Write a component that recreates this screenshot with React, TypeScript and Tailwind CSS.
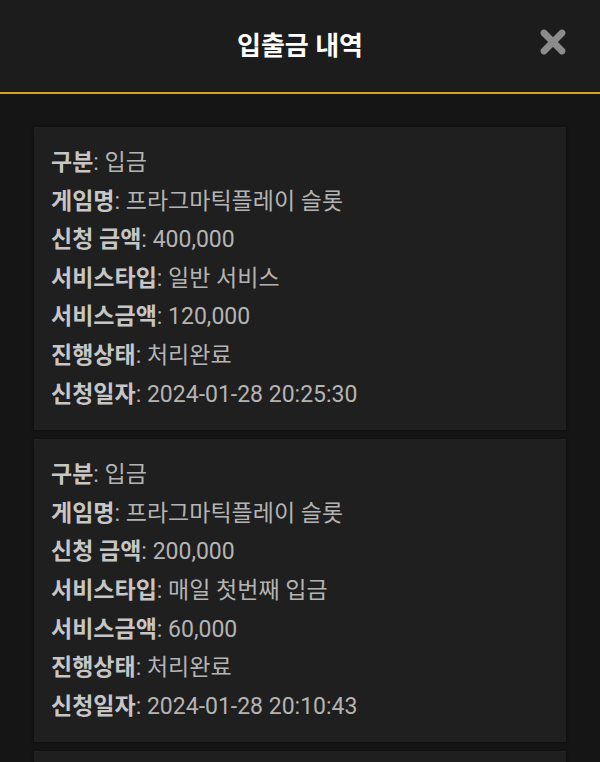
import { X } from 'lucide-react'

interface Entry {
  type: string
  game: string
  amount: string
  serviceType: string
  serviceAmount: string
  status: string
  date: string
}

const entries: Entry[] = [
  {
    type: '입금',
    game: '프라그마틱플레이 슬롯',
    amount: '400,000',
    serviceType: '일반 서비스',
    serviceAmount: '120,000',
    status: '처리완료',
    date: '2024-01-28 20:25:30',
  },
  {
    type: '입금',
    game: '프라그마틱플레이 슬롯',
    amount: '200,000',
    serviceType: '매일 첫번째 입금',
    serviceAmount: '60,000',
    status: '처리완료',
    date: '2024-01-28 20:10:43',
  },
  {
    type: '입금',
    game: '프라그마틱플레이 슬롯',
    amount: '100,000',
    serviceType: '일반 서비스',
    serviceAmount: '30,000',
    status: '처리완료',
    date: '2024-01-27 18:02:11',
  },
]

function Row({ label, value }: { label: string; value: string }) {
  return (
    <p className="h-[38.6px] leading-[38.6px] whitespace-nowrap">
      <span className="font-bold text-[#c6c6c6]">{label}</span>
      <span className="text-[#b4b4b4]">: {value}</span>
    </p>
  )
}

function EntryCard({ entry }: { entry: Entry }) {
  return (
    <div className="bg-[#1f1f1f] pt-[17px] pb-[16px] pl-[17px] shadow-[0_0_3px_rgba(0,0,0,0.5)]">
      <Row label="구분" value={entry.type} />
      <Row label="게임명" value={entry.game} />
      <Row label="신청 금액" value={entry.amount} />
      <Row label="서비스타입" value={entry.serviceType} />
      <Row label="서비스금액" value={entry.serviceAmount} />
      <Row label="진행상태" value={entry.status} />
      <Row label="신청일자" value={entry.date} />
    </div>
  )
}

export default function App() {
  return (
    <div
      className="flex h-[762px] w-[600px] flex-col overflow-hidden bg-[#151515]"
      style={{ fontFamily: 'Roboto, "Noto Sans CJK KR", sans-serif' }}
    >
      <header className="relative flex h-[94px] shrink-0 items-center justify-center border-b-2 border-[#d9a21c] bg-[#1c1c1c]">
        <h1 className="text-[26px] font-bold text-white">입출금 내역</h1>
        <button type="button" aria-label="닫기" className="absolute right-[29px] top-[24px] text-[#8c8c8c]">
          <X className="h-[36px] w-[36px]" strokeWidth={4.5} />
        </button>
      </header>

      <div className="flex flex-col gap-[9px] px-[34px] pt-[33px] text-[23px]">
        {entries.map((entry, i) => (
          <EntryCard key={i} entry={entry} />
        ))}
      </div>
    </div>
  )
}
